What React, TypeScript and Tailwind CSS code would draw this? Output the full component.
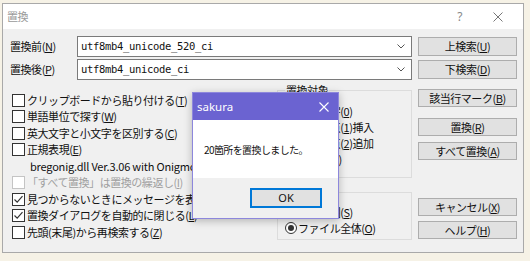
import type { ReactNode } from 'react';

const jp = "font-['Noto_Sans_CJK_JP',sans-serif]";

function U({ children }: { children: ReactNode }) {
  return <span className="underline underline-offset-[1px]">{children}</span>;
}

function Check({ checked, disabled, children }: { checked?: boolean; disabled?: boolean; children: ReactNode }) {
  return (
    <div className="flex h-[16.5px] items-center whitespace-nowrap">
      <span
        className={`flex h-[13px] w-[13px] shrink-0 items-center justify-center border bg-white ${
          disabled ? 'border-[#c4c4c4]' : 'border-[#333333]'
        }`}
      >
        {checked && (
          <svg width="11" height="11" viewBox="0 0 11 11">
            <path d="M1.5 5.5 L4.2 8.2 L9.5 2.2" fill="none" stroke="#333" strokeWidth="1.2" />
          </svg>
        )}
      </span>
      <span className={`ml-[2px] ${disabled ? 'text-[#a0a0a0]' : 'text-[#111]'}`}>{children}</span>
    </div>
  );
}

function Radio({ on, children }: { on?: boolean; children: ReactNode }) {
  return (
    <div className="flex h-[16px] items-center whitespace-nowrap">
      <span className="flex h-[12px] w-[12px] shrink-0 items-center justify-center rounded-full border border-[#333] bg-white">
        {on && <span className="h-[6px] w-[6px] rounded-full bg-[#333]" />}
      </span>
      <span className="ml-[1px]">{children}</span>
    </div>
  );
}

function Btn({ className, children }: { className: string; children: ReactNode }) {
  return (
    <div className={`flex items-center justify-center border border-[#adadad] bg-[#e1e1e1] ${className}`}>
      {children}
    </div>
  );
}

function Combo({ value }: { value: string }) {
  return (
    <div className="flex h-[21px] w-[335px] items-center justify-between border border-[#7a7a7a] bg-white pl-[3px] pr-[6px]">
      <span className="font-['DejaVu_Sans_Mono',monospace] text-[10.5px] tracking-[-0.32px] text-[#111]">{value}</span>
      <svg width="8" height="5" viewBox="0 0 8 5">
        <path d="M0.5 0.5 L4 4 L7.5 0.5" fill="none" stroke="#555" strokeWidth="1" />
      </svg>
    </div>
  );
}

export default function App() {
  return (
    <div className={`relative h-[261px] w-[530px] overflow-hidden bg-[#f6f2e6] pl-[2px] pt-[3px] ${jp} text-[11px] tracking-[-0.45px]`}>
      <div className="flex h-[250px] w-[522px] flex-col border border-[#a9a9a9] bg-[#f0f0f0]">
        {/* title bar */}
        <div className="flex h-[25px] shrink-0 items-center bg-white pl-[4px] text-[#9a9a9a]">
          <span className="text-[11px]">置換</span>
          <span className="ml-auto font-['Noto_Sans',sans-serif] text-[12px] text-[#888]">?</span>
          <svg className="ml-[31px] mr-[20px]" width="10" height="10" viewBox="0 0 10 10">
            <path d="M0.5 0.5 L9.5 9.5 M9.5 0.5 L0.5 9.5" stroke="#777" strokeWidth="1" />
          </svg>
        </div>

        {/* client */}
        <div className="flex flex-1 text-[#111]">
          <div className="w-[409px] pl-[7px]">
            <div className="mt-[7px] flex h-[21px] items-center">
              <span className="w-[67px]">
                置換前(<U>N</U>)
              </span>
              <Combo value="utf8mb4_unicode_520_ci" />
            </div>
            <div className="mt-[2px] flex h-[21px] items-center">
              <span className="w-[67px]">
                置換後(<U>P</U>)
              </span>
              <Combo value="utf8mb4_unicode_ci" />
            </div>

            <div className="flex items-start">
              <div className="mt-[11.75px] flex-1 pl-[2px]">
                <Check>
                  クリップボードから貼り付ける(<U>T</U>)
                </Check>
                <Check>
                  単語単位で探す(<U>W</U>)
                </Check>
                <Check>
                  英大文字と小文字を区別する(<U>C</U>)
                </Check>
                <Check>
                  正規表現(<U>E</U>)
                </Check>
                <div className="flex h-[16.5px] items-center whitespace-nowrap pl-[18px] tracking-[-0.2px]">
                  bregonig.dll Ver.3.06 with Onigmo 6.1.3
                </div>
                <Check disabled>
                  「すべて置換」は置換の繰返し(<U>I</U>)
                </Check>
                <Check checked>
                  見つからないときにメッセージを表示(<U>M</U>)
                </Check>
                <Check checked>
                  置換ダイアログを自動的に閉じる(<U>L</U>)
                </Check>
                <Check>
                  先頭(末尾)から再検索する(<U>Z</U>)
                </Check>
              </div>

              <div className="mt-[4px] w-[135px]">
                <fieldset className="h-[94px] border border-[#dcdcdc] pl-[7px]">
                  <legend className="px-[1px] leading-[12px]">置換対象</legend>
                  <div className="pt-[7px]">
                    <Radio on>
                      選択文字(<U>0</U>)
                    </Radio>
                    <Radio>
                      選択始点(<U>1</U>)挿入
                    </Radio>
                    <Radio>
                      選択終点(<U>2</U>)追加
                    </Radio>
                    <Radio>
                      行削除(<U>3</U>)
                    </Radio>
                  </div>
                </fieldset>
                <fieldset className="mt-[14px] h-[48px] border border-[#dcdcdc] pl-[7px]">
                  <div className="pt-[11px]">
                    <Radio>
                      選択範囲(<U>S</U>)
                    </Radio>
                    <Radio on>
                      ファイル全体(<U>O</U>)
                    </Radio>
                  </div>
                </fieldset>
              </div>
            </div>
          </div>

          <div className="ml-[6px] flex w-[99px] flex-col">
            <Btn className="mt-[8px] h-[19px]">
              上検索(<U>U</U>)
            </Btn>
            <Btn className="mt-[4px] h-[19px]">
              下検索(<U>D</U>)
            </Btn>
            <Btn className="mt-[10px] h-[18px]">
              該当行マーク(<U>B</U>)
            </Btn>
            <Btn className="mt-[11px] h-[18px]">
              置換(<U>R</U>)
            </Btn>
            <Btn className="mt-[6px] h-[18px]">
              すべて置換(<U>A</U>)
            </Btn>
            <Btn className="mt-[38px] h-[18px]">
              キャンセル(<U>X</U>)
            </Btn>
            <Btn className="mt-[5px] h-[18px]">
              ヘルプ(<U>H</U>)
            </Btn>
          </div>
        </div>
      </div>

      {/* message box */}
      <div className="absolute left-[192px] top-[92px] flex h-[127px] w-[147px] flex-col border border-[#8d87dc] shadow-[0_2px_8px_rgba(0,0,0,0.25)] tracking-normal">
        <div className="flex h-[27px] shrink-0 items-center bg-[#6b63d1] pl-[4px] pr-[9px] font-['Noto_Sans',sans-serif] text-[11.5px] text-white">
          <span>sakura</span>
          <svg className="ml-auto" width="10" height="10" viewBox="0 0 10 10">
            <path d="M0.5 0.5 L9.5 9.5 M9.5 0.5 L0.5 9.5" stroke="#fff" strokeWidth="1.1" />
          </svg>
        </div>
        <div className="flex h-[58px] shrink-0 items-center bg-white pl-[11px] text-[10px] tracking-[-0.6px] text-[#111]">
          20箇所を置換しました。
        </div>
        <div className="flex flex-1 justify-end bg-[#f0f0f0] pr-[16px] pt-[10px]">
          <div className="flex h-[20px] w-[72px] items-center justify-center border-2 border-[#0078d7] bg-[#e1e1e1] font-['Noto_Sans',sans-serif] text-[11px] text-[#111]">
            OK
          </div>
        </div>
      </div>
    </div>
  );
}
